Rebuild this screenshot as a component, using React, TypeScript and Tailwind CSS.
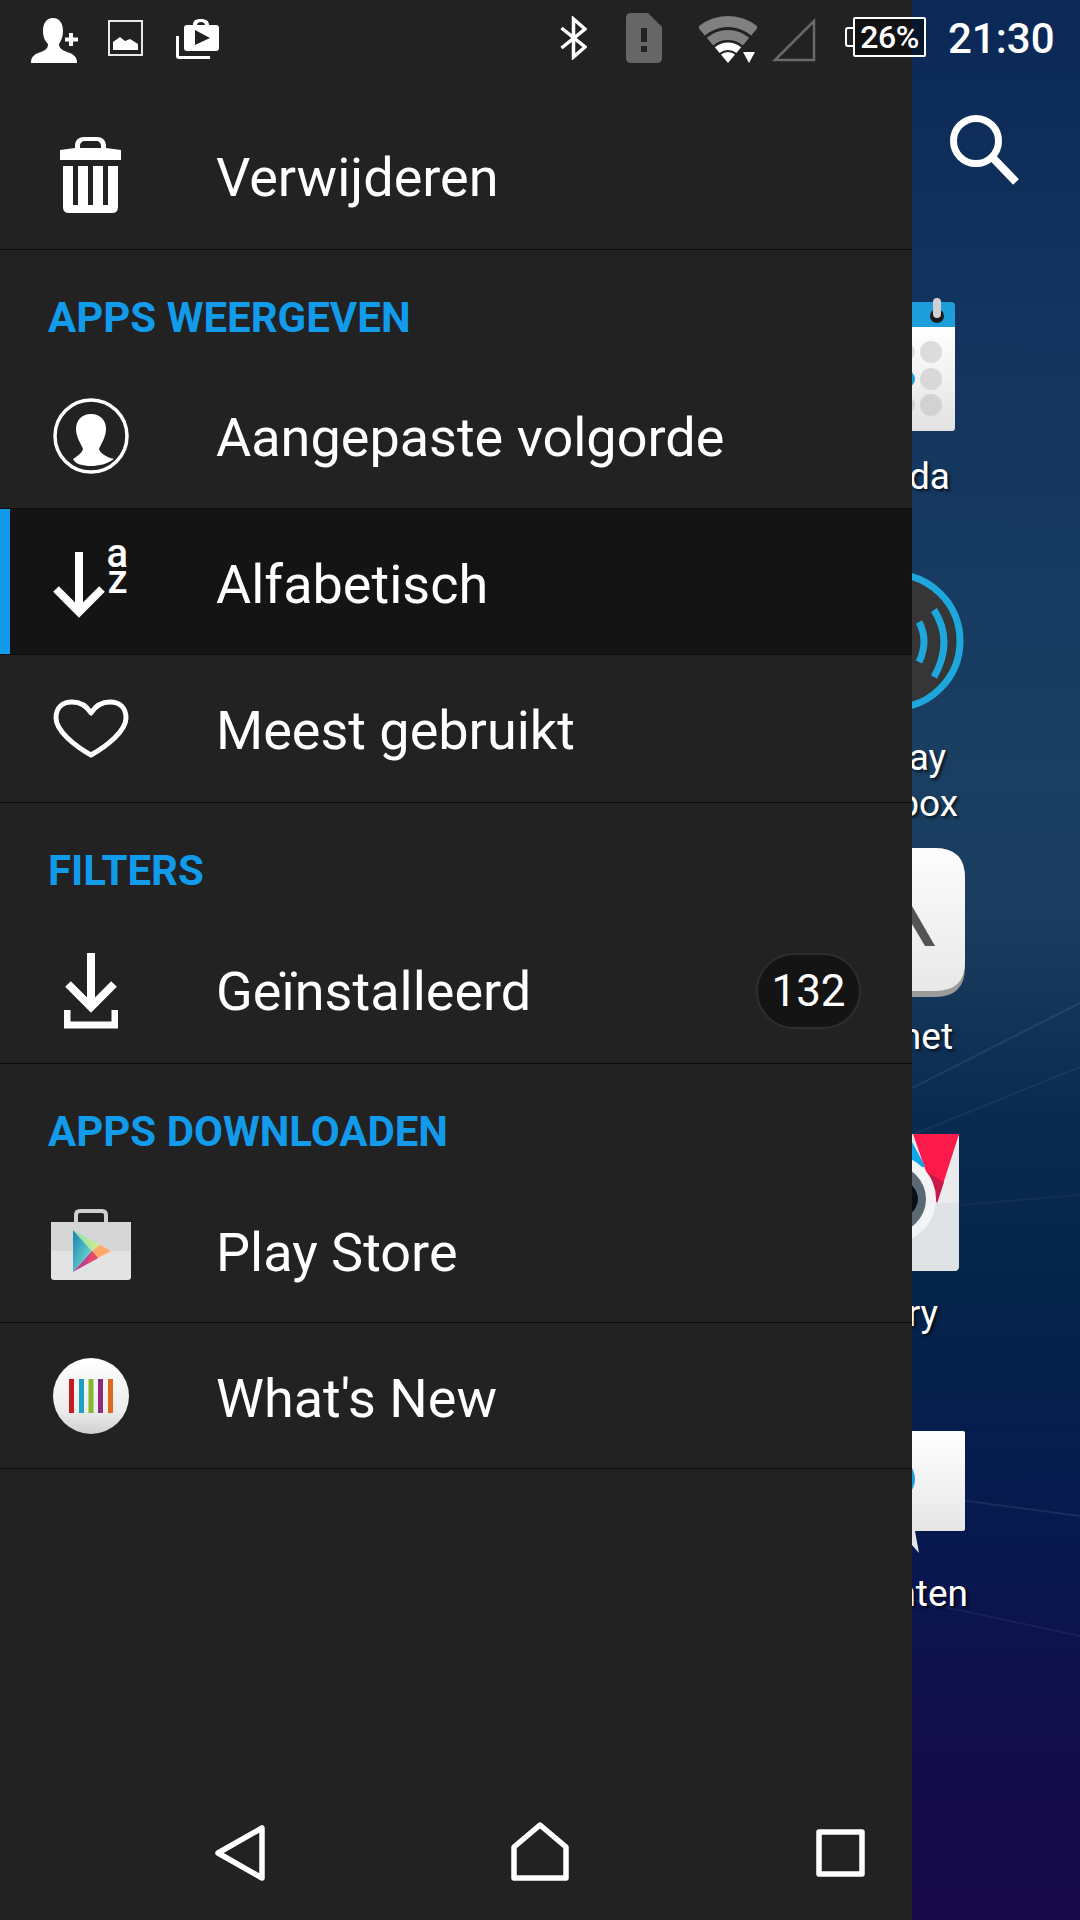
import React from 'react';

// annular wedge of the wifi icon, apex at (29, 47)
function wifiBand(r1: number, r2: number) {
  const a = (40 * Math.PI) / 180;
  const sx = Math.sin(a);
  const cy = Math.cos(a);
  const p = (r: number, s: number) => `${(29 + s * r * sx).toFixed(2)} ${(47 - r * cy).toFixed(2)}`;
  return `M${p(r1, -1)} L${p(r2, -1)} A${r2} ${r2} 0 0 1 ${p(r2, 1)} L${p(r1, 1)} A${r1} ${r1} 0 0 0 ${p(r1, -1)}Z`;
}

function StatusBar() {
  return (
    <div className="absolute left-0 top-0 z-10 flex w-[1080px] h-[75px] items-start">
      {/* person add */}
      <svg width="49" height="46" viewBox="0 0 49 46" className="ml-[31px] mt-[18px]" fill="white">
        <path d="M22 0C29 0 32 6 32 13C32 19 30 23 28 26C28 30 31 32 36 34C42 36 46 38 46 45H0C0 38 4 36 10 34C15 32 17 30 17 26C14 23 12 19 12 13C12 6 15 0 22 0Z" />
        <rect x="38" y="15" width="4" height="13" />
        <rect x="34" y="19.500" width="13" height="4" />
      </svg>
      {/* picture */}
      <svg width="35" height="36" viewBox="0 0 35 36" className="ml-[28px] mt-[20px]">
        <rect x="1" y="1" width="33" height="34" fill="none" stroke="#e8e8e8" strokeWidth="2" />
        <path d="M5 30V22L12 17L17 21L22 19L30 24V30Z" fill="white" />
      </svg>
      {/* movies bag */}
      <svg width="43" height="41" viewBox="0 0 43 41" className="ml-[33px] mt-[19px]" fill="white">
        <path d="M0 17H3V37H34V40H3Q0 40 0 37Z" />
        <path d="M17 6C17 2 19 0 25 0C30 0 33 2 33 6H40Q43 6 43 9V29Q43 32 40 32H11Q8 32 8 29V9Q8 6 11 6ZM21 6H29C29 4 27 3 25 3C23 3 21 4 21 6Z" fillRule="evenodd" />
        <path d="M19 11L34 19L19 26Z" fill="#222222" />
      </svg>
      {/* bluetooth */}
      <svg width="27" height="44" viewBox="0 0 27 44" className="ml-[341px] mt-[16px]" fill="none" stroke="white" strokeWidth="3.500">
        <path d="M1.500 12L25 31L13.500 41V3L25 13L1.500 32" />
      </svg>
      {/* sim warning */}
      <svg width="36" height="50" viewBox="0 0 36 50" className="ml-[39px] mt-[13px]">
        <path d="M5 0H22L36 14V45Q36 50 31 50H5Q0 50 0 45V5Q0 0 5 0Z" fill="#666666" />
        <rect x="15" y="15" width="6" height="14" fill="#222222" />
        <rect x="15" y="33" width="6" height="6" fill="#222222" />
      </svg>
      {/* wifi */}
      <svg width="58" height="48" viewBox="0 0 58 48" className="ml-[37px] mt-[16px]">
        <path d={wifiBand(36, 47)} fill="#808080" />
        <path d={wifiBand(23, 33)} fill="#808080" />
        <path d={wifiBand(13, 20.500)} fill="white" />
        <path d={wifiBand(0, 11)} fill="white" />
        <path d="M44 36H56L50 47Z" fill="white" />
      </svg>
      {/* signal */}
      <svg width="44" height="45" viewBox="0 0 44 45" className="ml-[15px] mt-[17px]">
        <path d="M42 4V43H3Z" fill="none" stroke="#6a6a6a" strokeWidth="2.500" />
      </svg>
      {/* battery */}
      <div className="ml-[29px] mt-[17px] flex items-center">
        <div className="w-[8px] h-[20px] border-2 border-r-0 border-white rounded-l-[3px]" />
        <div className="flex h-[40px] w-[73px] items-center justify-center border-2 border-white rounded-[2px] bg-black/45 text-[32px] font-medium text-white tracking-[-0.5px]">
          26%
        </div>
      </div>
      <span className="ml-[22px] mt-[15px] text-[42px] leading-[48px] font-medium text-white">21:30</span>
    </div>
  );
}

const TrashIcon = () => (
  <svg width="61" height="77" viewBox="0 0 61 77" fill="white" className="-mt-[2px]">
    <path d="M15 11V9C15 3 19 0 24 0H37C42 0 46 3 46 9V11L61 13V23H0V13ZM20 11H41V9C41 6 39 4 36 4H25C22 4 20 6 20 9Z" fillRule="evenodd" />
    <path d="M3 29H58V70Q58 76 52 76H9Q3 76 3 70Z" />
    <rect x="13" y="29" width="5" height="39" fill="#222222" />
    <rect x="28" y="29" width="5" height="39" fill="#222222" />
    <rect x="43" y="29" width="5" height="39" fill="#222222" />
  </svg>
);

const PersonCircleIcon = () => (
  <svg width="76" height="76" viewBox="0 0 76 76">
    <circle cx="38" cy="38" r="36" fill="none" stroke="white" strokeWidth="3.500" />
    <path d="M38 16C48 16 53 23 53 31C53 39 48 46 46 51C47 55 53 59 61 61C54 66 46 68 38 68C30 68 22 66 20 61C23 59 29 55 30 51C28 46 23 39 23 31C23 23 28 16 38 16Z" fill="white" />
  </svg>
);

const SortIcon = () => (
  <div className="relative w-[76px] h-[76px]">
    <svg width="52" height="68" viewBox="0 0 52 68" className="absolute left-0 top-[8px]" fill="none" stroke="white" strokeWidth="8">
      <path d="M26 0V60" />
      <path d="M3 37L26 60L49 37" />
    </svg>
    <span className="absolute left-[54px] top-[-3px] text-[40px] leading-[26px] font-medium text-white">a</span>
    <span className="absolute left-[55px] top-[23px] text-[40px] leading-[26px] font-medium text-white">z</span>
  </div>
);

const HeartIcon = () => (
  <svg width="76" height="59" viewBox="0 0 76 59">
    <path d="M38 14C33 6 27 3 19 3C9 3 3 9 3 19C3 32 22 47 38 56C54 47 73 32 73 19C73 9 67 3 57 3C49 3 43 6 38 14Z" fill="none" stroke="white" strokeWidth="5" strokeLinejoin="round" />
  </svg>
);

const DownloadIcon = () => (
  <svg width="54" height="76" viewBox="0 0 54 76" fill="none" stroke="white">
    <path d="M27 0V52" strokeWidth="8" />
    <path d="M4 31L27 54L50 31" strokeWidth="8" />
    <path d="M3 57V72H51V57" strokeWidth="7" />
  </svg>
);

const PlayStoreIcon = () => (
  <svg width="80" height="71" viewBox="0 0 80 71" className="-mt-[10px]">
    <defs>
      <linearGradient id="psBlue" x1="0" y1="0" x2="1" y2="1">
        <stop offset="0" stopColor="#1a7fb5" />
        <stop offset="1" stopColor="#7ef0d0" />
      </linearGradient>
      <linearGradient id="psGreen" x1="0" y1="0" x2="1" y2="0">
        <stop offset="0" stopColor="#7fe3b0" />
        <stop offset="1" stopColor="#d8ec90" />
      </linearGradient>
    </defs>
    <path d="M25 14V6Q25 2 29 2H51Q55 2 55 6V14" fill="none" stroke="#cfcfcf" strokeWidth="4" />
    <path d="M0 13H80V68Q80 71 77 71H3Q0 71 0 68Z" fill="#e3e3e3" />
    <path d="M0 13H80V42H0Z" fill="#d6d6d6" />
    <path d="M22 21L41 42L22 63Z" fill="url(#psBlue)" />
    <path d="M22 21L49 36L41 42Z" fill="url(#psGreen)" />
    <path d="M22 63L41 42L47 49Z" fill="#c23f8f" />
    <path d="M41 42L47 49L60 42L49 36Z" fill="#ffa86c" />
    <path d="M41 42L47 49L36 55Z" fill="#ea4a63" />
  </svg>
);

const WhatsNewIcon = () => (
  <svg width="76" height="76" viewBox="0 0 76 76">
    <defs>
      <linearGradient id="wnBg" x1="0" y1="0" x2="0" y2="1">
        <stop offset="0" stopColor="#ffffff" />
        <stop offset="0.7" stopColor="#ececec" />
        <stop offset="1" stopColor="#cfcfcf" />
      </linearGradient>
    </defs>
    <circle cx="38" cy="38" r="38" fill="url(#wnBg)" />
    <rect x="16" y="21" width="5" height="34" fill="#c41a22" />
    <rect x="26" y="21" width="5" height="34" fill="#1f9fc8" />
    <rect x="35.500" y="21" width="5" height="34" fill="#86b82e" />
    <rect x="45" y="21" width="5" height="34" fill="#8c2a86" />
    <rect x="55" y="21" width="5" height="34" fill="#dd6a1f" />
  </svg>
);

function MenuRow({ icon, label, selected, badge, height = 'h-[146px]', labelPad = 'pt-[6px]' }: { icon: React.ReactNode; label: string; selected?: boolean; badge?: string; height?: string; labelPad?: string }) {
  return (
    <div className={`relative flex items-center border-b border-[#0c0c0c] ${height} ${selected ? 'bg-[#141414]' : ''}`}>
      {selected && <div className="absolute left-0 top-0 bottom-0 w-[10px] bg-[#129bea]" />}
      <div className="flex w-[181px] shrink-0 justify-center">{icon}</div>
      <span className={`ml-[35px] text-[54px] text-white ${labelPad}`}>{label}</span>
      {badge && (
        <span className="ml-auto mr-[51px] flex h-[76px] w-[105px] items-center justify-center rounded-full border-2 border-[#2e2e2e] bg-[#141414] text-[44px] text-white">
          {badge}
        </span>
      )}
    </div>
  );
}

function SectionHeader({ title, height, pad }: { title: string; height: string; pad: string }) {
  return (
    <div className={`flex items-center pl-[48px] text-[42px] font-bold text-[#129bea] ${height} ${pad}`}>
      {title}
    </div>
  );
}

function Drawer() {
  return (
    <div className="flex h-[1920px] w-[912px] shrink-0 flex-col bg-[#222222] pt-[104px]">
      <MenuRow icon={<TrashIcon />} label="Verwijderen" labelPad="pt-[1px]" />
      <SectionHeader title="APPS WEERGEVEN" height="h-[113px]" pad="pt-[22px]" />
      <MenuRow icon={<PersonCircleIcon />} label="Aangepaste volgorde" labelPad="pt-[4px]" />
      <MenuRow icon={<SortIcon />} label="Alfabetisch" selected />
      <MenuRow icon={<HeartIcon />} label="Meest gebruikt" height="h-[148px]" labelPad="pt-[4px]" />
      <SectionHeader title="FILTERS" height="h-[115px]" pad="pt-[20px]" />
      <MenuRow icon={<DownloadIcon />} label="Geïnstalleerd" badge="132" labelPad="pt-[1px]" />
      <SectionHeader title="APPS DOWNLOADEN" height="h-[113px]" pad="pt-[21px]" />
      <MenuRow icon={<PlayStoreIcon />} label="Play Store" />
      <MenuRow icon={<WhatsNewIcon />} label="What's New" />

      {/* nav bar */}
      <div className="mt-auto mb-[39px] flex items-end">
        <svg width="50" height="56" viewBox="0 0 50 56" className="ml-[215px]" fill="none" stroke="white" strokeWidth="5.500" strokeLinejoin="round">
          <path d="M3 28L47 3V53Z" />
        </svg>
        <svg width="58" height="59" viewBox="0 0 58 59" className="ml-[246px]" fill="none" stroke="white" strokeWidth="5.500" strokeLinejoin="round">
          <path d="M3 56V25L29 3L55 25V56Z" />
        </svg>
        <svg width="49" height="48" viewBox="0 0 49 48" className="ml-[247px] mb-[4px]" fill="none" stroke="white" strokeWidth="5.500" strokeLinejoin="round">
          <rect x="3" y="3" width="43" height="42" />
        </svg>
      </div>
    </div>
  );
}

function Label({ children, mr }: { children: React.ReactNode; mr: string }) {
  return (
    <span className={`whitespace-nowrap text-[37px] leading-[46px] text-white [text-shadow:2px_2px_3px_rgba(0,0,0,0.7)] ${mr}`}>
      {children}
    </span>
  );
}

function HomeColumn() {
  return (
    <div className="relative flex h-[1920px] min-w-0 flex-1 flex-col items-end overflow-hidden">
      {/* wallpaper streaks */}
      <svg width="168" height="1920" viewBox="0 0 168 1920" className="absolute left-0 top-0" fill="none" stroke="white" strokeWidth="2">
        <path d="M0 1088L168 1003" strokeOpacity="0.08" />
        <path d="M0 1135L168 1067" strokeOpacity="0.05" />
        <path d="M48 1205L168 1195" strokeOpacity="0.04" />
        <path d="M48 1500L168 1516" strokeOpacity="0.08" />
        <path d="M0 1600L168 1636" strokeOpacity="0.06" />
      </svg>

      <svg width="69" height="70" viewBox="0 0 69 70" className="relative mr-[61px] mt-[115px]" fill="none" stroke="white">
        <circle cx="26" cy="26" r="22.500" strokeWidth="7" />
        <path d="M43 43L66 67" strokeWidth="8" />
      </svg>

      {/* agenda */}
      <svg width="43" height="134" viewBox="0 0 43 134" className="relative mr-[125px] mt-[113px]">
        <defs>
          <linearGradient id="agBody" x1="0" y1="0" x2="0" y2="1">
            <stop offset="0" stopColor="#ffffff" />
            <stop offset="1" stopColor="#e2e2e2" />
          </linearGradient>
        </defs>
        <path d="M0 4H39Q43 4 43 8V29H0Z" fill="#1e9ddb" />
        <path d="M0 29H43V130Q43 133 40 133H0Z" fill="url(#agBody)" />
        <circle cx="25" cy="18" r="7" fill="#1a1a1a" />
        <rect x="21" y="0" width="8" height="20" rx="4" fill="#d0d0d0" />
        <ellipse cx="19" cy="54" rx="11" ry="11" fill="#dcdcdc" />
        <ellipse cx="19" cy="81" rx="11" ry="11" fill="#d8d8d8" />
        <ellipse cx="19" cy="107" rx="11" ry="11" fill="#d2d2d2" />
        <circle cx="-6" cy="54" r="9" fill="#dcdcdc" />
        <circle cx="-6" cy="81" r="9" fill="#1e9ddb" />
        <circle cx="-6" cy="107" r="9" fill="#d2d2d2" />
      </svg>
      <div className="relative mt-[22px] flex flex-col items-end">
        <Label mr="mr-[130px]">Agenda</Label>
      </div>

      {/* play */}
      <svg width="52" height="142" viewBox="0 0 52 142" className="relative mr-[116px] mt-[70px]" fill="none">
        <circle cx="-19" cy="71" r="70" fill="#363636" />
        <circle cx="-19" cy="71" r="67" stroke="#1ea7dc" strokeWidth="7" />
        <path d="M7 52Q17 71 7 92" stroke="#1ea7dc" strokeWidth="7" />
        <path d="M22 40Q42 71 22 107" stroke="#1ea7dc" strokeWidth="7" />
      </svg>
      <div className="relative mt-[23px] flex flex-col items-end">
        <Label mr="mr-[134px]">Play</Label>
        <Label mr="mr-[122px]">Xbox</Label>
      </div>

      {/* internet */}
      <svg width="53" height="149" viewBox="0 0 53 149" className="relative mr-[115px] mt-[21px]">
        <defs>
          <linearGradient id="inBody" x1="0" y1="0" x2="0" y2="1">
            <stop offset="0" stopColor="#fdfdfd" />
            <stop offset="1" stopColor="#e8e8e8" />
          </linearGradient>
        </defs>
        <path d="M0 0H23Q53 0 53 30V119Q53 149 23 149H0Z" fill="#9b9b9b" />
        <path d="M0 0H23Q53 0 53 30V114Q53 143 23 143H0Z" fill="url(#inBody)" />
        <path d="M0 58L23 98H13L0 76Z" fill="#555353" />
      </svg>
      <div className="relative mt-[17px] flex flex-col items-end">
        <Label mr="mr-[127px]">Internet</Label>
      </div>

      {/* gallery */}
      <svg width="47" height="137" viewBox="0 0 47 137" className="relative mr-[121px] mt-[74px]">
        <path d="M0 0H44Q47 0 47 3V132Q47 137 42 137H0Z" fill="#e8eaec" />
        <path d="M24 69L47 69V132Q47 137 42 137H0V100Z" fill="#dfe2e4" />
        <path d="M1 0H47L25 69Z" fill="#fb1a4a" />
        <path d="M15 38L25 69L32 48Z" fill="#c9184a" />
        <path d="M0 8L13 32L0 40Z" fill="#12a5e8" />
        <circle cx="-20" cy="65" r="44" fill="#f2f4f5" />
        <circle cx="-20" cy="65" r="34" fill="#5b6a72" />
        <ellipse cx="-20" cy="65" rx="26" ry="21" fill="#050f14" />
      </svg>
      <div className="relative mt-[20px] flex flex-col items-end">
        <Label mr="mr-[142px]">Gallery</Label>
      </div>

      {/* speech bubble */}
      <svg width="53" height="123" viewBox="0 0 53 123" className="relative mr-[115px] mt-[94px]">
        <defs>
          <linearGradient id="coBody" x1="0" y1="0" x2="0" y2="1">
            <stop offset="0" stopColor="#ffffff" />
            <stop offset="1" stopColor="#e6e6e6" />
          </linearGradient>
        </defs>
        <path d="M0 0H51Q53 0 53 2V98Q53 100 51 100H0Z" fill="url(#coBody)" />
        <circle cx="-18" cy="48" r="21" fill="#1e9ddb" />
        <path d="M0 100H3L7 122L0 114Z" fill="#e6e6e6" />
      </svg>
      <div className="relative mt-[17px] flex flex-col items-end">
        <Label mr="mr-[112px]">Documenten</Label>
      </div>
    </div>
  );
}

export default function App() {
  return (
    <div className="relative flex h-[1920px] w-[1080px] overflow-hidden bg-[linear-gradient(180deg,#0b2856_0%,#12335e_15%,#1a3f62_40%,#1b3e60_47%,#0a2b50_58%,#04234a_68%,#07194f_80%,#140c4b_92%,#170a49_100%)] font-['Roboto',sans-serif]">
      <Drawer />
      <HomeColumn />
      <StatusBar />
    </div>
  );
}
